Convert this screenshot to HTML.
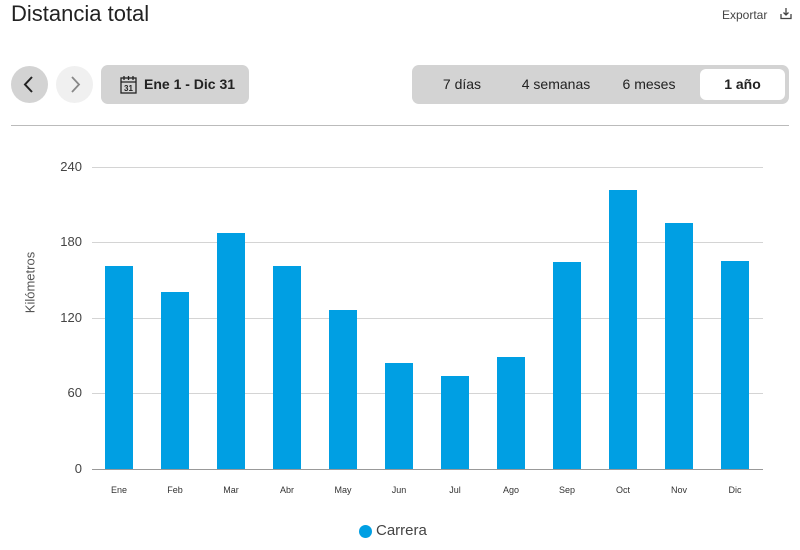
<!DOCTYPE html><html><head><style>
body{margin:0;width:800px;height:550px;background:#fff;font-family:"Liberation Sans",sans-serif;position:relative;overflow:hidden;color:#222}
.a{position:absolute}
.g{position:absolute;left:92px;width:671px;height:1px;background:#d4d4d4}
.b{position:absolute;width:28px;background:#009fe3;bottom:81px}
.yl{position:absolute;left:40px;width:42px;text-align:right;font-size:13px;color:#444}
.xl{position:absolute;top:485px;width:56px;text-align:center;font-size:9px;color:#333}
.tab{position:absolute;top:69px;height:31px;line-height:31px;font-size:14px;text-align:center}
</style></head><body>
<div class="a" style="left:11px;top:1px;font-size:22px;color:#222">Distancia total</div>
<div class="a" style="left:722px;top:8px;font-size:12px;color:#444">Exportar</div>
<svg class="a" style="left:780px;top:7px" width="12" height="13" viewBox="0 0 12 13"><path d="M6 1v7M3.5 5.5L6 8l2.5-2.5M1 7v4.5h10V7" fill="none" stroke="#444" stroke-width="1.3"/></svg>
<div class="a" style="left:11px;top:66px;width:37px;height:37px;border-radius:50%;background:#d3d3d3"></div>
<svg class="a" style="left:21px;top:75px" width="16" height="19"><path d="M11 2L4 9.5 11 17" fill="none" stroke="#222" stroke-width="2"/></svg>
<div class="a" style="left:56px;top:66px;width:37px;height:37px;border-radius:50%;background:#f0f0f0"></div>
<svg class="a" style="left:67px;top:75px" width="16" height="19"><path d="M5 2l7 7.5L5 17" fill="none" stroke="#888" stroke-width="1.8"/></svg>
<div class="a" style="left:101px;top:65px;width:148px;height:39px;border-radius:7px;background:#d3d3d3"></div>
<svg class="a" style="left:120px;top:75px" width="17" height="19" viewBox="0 0 17 19"><rect x="1" y="3" width="15" height="15" fill="none" stroke="#222" stroke-width="1.3"/><path d="M1 7h15M4 1v4M8.5 1v4M13 1v4" stroke="#222" stroke-width="1.3"/><text x="8.5" y="16" font-size="8" text-anchor="middle" font-family="Liberation Sans" font-weight="bold" fill="#222">31</text></svg>
<div class="a" style="left:144px;top:76px;font-size:14px;font-weight:bold;color:#222">Ene 1 - Dic 31</div>
<div class="a" style="left:412px;top:65px;width:377px;height:39px;border-radius:7px;background:#d3d3d3"></div>
<div class="tab" style="left:428px;width:68px">7 días</div>
<div class="tab" style="left:510px;width:92px">4 semanas</div>
<div class="tab" style="left:612px;width:74px">6 meses</div>
<div class="tab" style="left:700px;width:85px;background:#fff;border-radius:6px;font-weight:bold">1 año</div>
<div class="a" style="left:11px;top:125px;width:778px;height:1px;background:#bbb"></div>
<div class="g" style="top:167px"></div><div class="g" style="top:242px"></div><div class="g" style="top:318px"></div><div class="g" style="top:393px"></div>
<div class="g" style="top:469px;background:#999"></div>
<div class="yl" style="top:159px">240</div><div class="yl" style="top:234px">180</div><div class="yl" style="top:310px">120</div><div class="yl" style="top:385px">60</div><div class="yl" style="top:461px">0</div>
<div class="a" style="left:-10px;top:275px;font-size:13px;color:#555;transform:rotate(-90deg);width:80px;text-align:center">Kilómetros</div>
<div class="b" style="left:105px;top:266px"></div>
<div class="b" style="left:161px;top:292px"></div>
<div class="b" style="left:217px;top:233px"></div>
<div class="b" style="left:273px;top:266px"></div>
<div class="b" style="left:329px;top:310px"></div>
<div class="b" style="left:385px;top:363px"></div>
<div class="b" style="left:441px;top:376px"></div>
<div class="b" style="left:497px;top:357px"></div>
<div class="b" style="left:553px;top:262px"></div>
<div class="b" style="left:609px;top:190px"></div>
<div class="b" style="left:665px;top:223px"></div>
<div class="b" style="left:721px;top:261px"></div>
<div class="xl" style="left:91px">Ene</div><div class="xl" style="left:147px">Feb</div><div class="xl" style="left:203px">Mar</div><div class="xl" style="left:259px">Abr</div><div class="xl" style="left:315px">May</div><div class="xl" style="left:371px">Jun</div><div class="xl" style="left:427px">Jul</div><div class="xl" style="left:483px">Ago</div><div class="xl" style="left:539px">Sep</div><div class="xl" style="left:595px">Oct</div><div class="xl" style="left:651px">Nov</div><div class="xl" style="left:707px">Dic</div>
<div class="a" style="left:359px;top:525px;width:13px;height:13px;border-radius:50%;background:#009fe3"></div>
<div class="a" style="left:376px;top:522px;font-size:15px;color:#444">Carrera</div>
</body></html>
